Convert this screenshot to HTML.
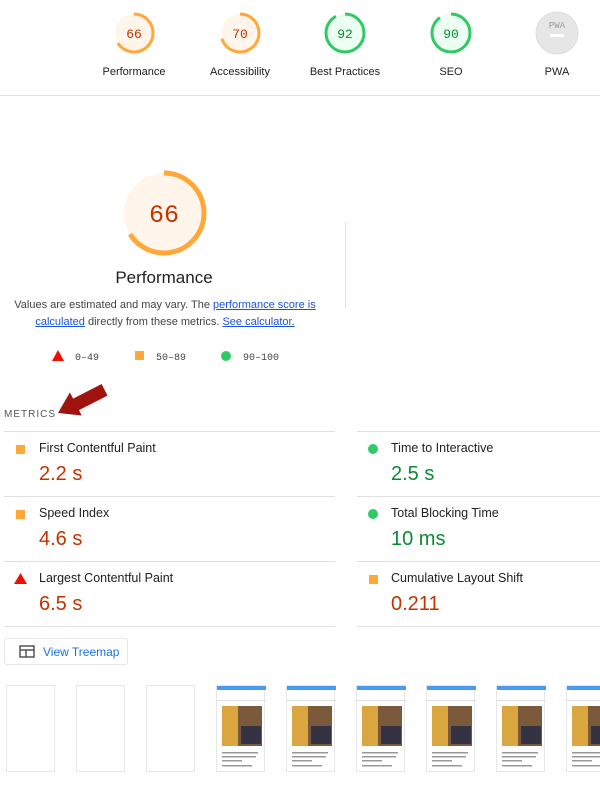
<!DOCTYPE html>
<html><head><meta charset="utf-8"><style>
body{margin:0;width:600px;height:787px;overflow:hidden;background:#fff;font-family:"Liberation Sans",Arial,sans-serif;color:#212121;position:relative}
.a{position:absolute}
.gl{position:absolute;top:66px;font-size:11px;width:120px;text-align:center;color:#212121}
.mt{position:absolute;font-size:12.5px;color:#212121}
.mv{position:absolute;font-size:20px}
.sep{position:absolute;height:1px;background:#e0e0e0}
.th{position:absolute;top:685px;width:49px;height:87px;border:1px solid #e6e6e6;box-sizing:border-box;background:#fff}
</style></head><body>
<svg class="a" style="left:0;top:0" width="600" height="100">
<g font-family="Liberation Mono,monospace" font-size="13" text-anchor="middle">
<circle cx="134" cy="33" r="19" fill="#fff5eb"/><circle cx="134" cy="33" r="19" fill="none" stroke="#ffa739" stroke-width="3" stroke-dasharray="78.8 200" transform="rotate(-90 134 33)"/><text x="134" y="38" fill="#c33300">66</text>
<circle cx="240" cy="33" r="19" fill="#fff5eb"/><circle cx="240" cy="33" r="19" fill="none" stroke="#ffa739" stroke-width="3" stroke-dasharray="83.6 200" transform="rotate(-90 240 33)"/><text x="240" y="38" fill="#c33300">70</text>
<circle cx="345" cy="33" r="19" fill="#ebfff3"/><circle cx="345" cy="33" r="19" fill="none" stroke="#2fca64" stroke-width="3" stroke-dasharray="109.8 200" transform="rotate(-90 345 33)"/><text x="345" y="38" fill="#0a8a33">92</text>
<circle cx="451" cy="33" r="19" fill="#ebfff3"/><circle cx="451" cy="33" r="19" fill="none" stroke="#2fca64" stroke-width="3" stroke-dasharray="107.4 200" transform="rotate(-90 451 33)"/><text x="451" y="38" fill="#0a8a33">90</text>
<circle cx="557" cy="33" r="21" fill="#e6e6e6" stroke="#ddd"/><text x="557" y="28" fill="#999" font-size="9">PWA</text><rect x="550" y="34" width="14" height="3" fill="#fff"/>
</g></svg>
<div class="gl" style="left:74px">Performance</div>
<div class="gl" style="left:180px">Accessibility</div>
<div class="gl" style="left:285px">Best Practices</div>
<div class="gl" style="left:391px">SEO</div>
<div class="gl" style="left:497px">PWA</div>
<div class="sep" style="left:0;top:95px;width:600px"></div>

<svg class="a" style="left:114px;top:163px" width="100" height="100">
<circle cx="50" cy="50" r="40" fill="#fff5eb"/>
<circle cx="50" cy="50" r="40" fill="none" stroke="#ffa739" stroke-width="5" stroke-dasharray="165.9 300" transform="rotate(-90 50 50)"/>
<text x="50" y="59" text-anchor="middle" font-family="Liberation Mono,monospace" font-size="25" fill="#c33300">66</text></svg>
<div class="a" style="left:64px;top:268px;width:200px;text-align:center;font-size:17px">Performance</div>
<div class="a" style="left:10px;top:297px;width:310px;text-align:center;font-size:11px;line-height:17px;color:#444">Values are estimated and may vary. The <span style="color:#1a53e0;text-decoration:underline">performance score is calculated</span> directly from these metrics. <span style="color:#1a53e0;text-decoration:underline">See calculator.</span></div>
<div class="a" style="left:345px;top:222px;width:1px;height:86px;background:#e0e0e0"></div>
<svg class="a" style="left:50px;top:349px" width="260" height="14">
<polygon points="8,1 14,12 2,12" fill="#eb0f00"/>
<rect x="85" y="2" width="9" height="9" fill="#ffa739"/>
<circle cx="176" cy="7" r="5" fill="#2fca64"/>
<g font-family="Liberation Mono,monospace" font-size="10" fill="#444"><text x="25" y="11">0–49</text><text x="106" y="11">50–89</text><text x="193" y="11">90–100</text></g></svg>

<svg class="a" style="left:0;top:370px" width="130" height="60"><g transform="translate(58 43) rotate(-27)"><polygon points="0,0 20,-13 20,-6 52,-6 52,7 20,7 20,13" fill="#a0140f"/></g></svg>
<div class="a" style="left:4px;top:409px;font-size:10px;letter-spacing:1px;color:#555">METRICS</div>
<div class="sep" style="left:4px;top:431px;width:331px"></div>
<div class="sep" style="left:357px;top:431px;width:243px"></div>
<div class="sep" style="left:4px;top:496px;width:331px"></div><div class="sep" style="left:357px;top:496px;width:243px"></div>
<div class="sep" style="left:4px;top:561px;width:331px"></div><div class="sep" style="left:357px;top:561px;width:243px"></div>
<div class="sep" style="left:4px;top:626px;width:331px"></div><div class="sep" style="left:357px;top:626px;width:243px"></div>

<div class="a" style="left:16px;top:445px;width:9px;height:9px;background:#ffa739"></div>
<div class="mt" style="left:39px;top:441px">First Contentful Paint</div><div class="mv" style="left:39px;top:463px;color:#c33300">2.2 s</div>
<div class="a" style="left:16px;top:510px;width:9px;height:9px;background:#ffa739"></div>
<div class="mt" style="left:39px;top:506px">Speed Index</div><div class="mv" style="left:39px;top:528px;color:#c33300">4.6 s</div>
<svg class="a" style="left:14px;top:573px" width="13" height="12"><polygon points="6.5,0 13,11 0,11" fill="#eb0f00"/></svg>
<div class="mt" style="left:39px;top:571px">Largest Contentful Paint</div><div class="mv" style="left:39px;top:593px;color:#c33300">6.5 s</div>
<div class="a" style="left:368px;top:444px;width:10px;height:10px;border-radius:50%;background:#2fca64"></div>
<div class="mt" style="left:391px;top:441px">Time to Interactive</div><div class="mv" style="left:391px;top:463px;color:#0a8a33">2.5 s</div>
<div class="a" style="left:368px;top:509px;width:10px;height:10px;border-radius:50%;background:#2fca64"></div>
<div class="mt" style="left:391px;top:506px">Total Blocking Time</div><div class="mv" style="left:391px;top:528px;color:#0a8a33">10 ms</div>
<div class="a" style="left:369px;top:575px;width:9px;height:9px;background:#ffa739"></div>
<div class="mt" style="left:391px;top:571px">Cumulative Layout Shift</div><div class="mv" style="left:391px;top:593px;color:#c33300">0.211</div>

<div class="a" style="left:4px;top:638px;width:124px;height:27px;border:1px solid #e6e6e6;border-radius:3px;box-sizing:border-box"></div>
<svg class="a" style="left:19px;top:645px" width="16" height="13"><rect x="1" y="1" width="14" height="11" fill="none" stroke="#555" stroke-width="1.5"/><line x1="1" y1="5" x2="15" y2="5" stroke="#555" stroke-width="1.5"/><line x1="7" y1="5" x2="7" y2="12" stroke="#555" stroke-width="1.5"/></svg>
<div class="a" style="left:43px;top:645px;font-size:12px;color:#1a73e8">View Treemap</div>

<div class="th" style="left:6px"></div><div class="th" style="left:76px"></div><div class="th" style="left:146px"></div>
<div class="th" style="left:216px"><svg width="49" height="87"><rect width="49" height="4" fill="#4a9af5"/><rect x="0" y="14" width="49" height="1" fill="#ddd"/><rect x="5" y="20" width="40" height="40" fill="#7a5a3a"/><rect x="5" y="20" width="16" height="40" fill="#d9a640"/><rect x="24" y="40" width="20" height="18" fill="#334"/><g fill="#999"><rect x="5" y="66" width="36" height="1.5"/><rect x="5" y="70" width="34" height="1.5"/><rect x="5" y="74" width="20" height="1.5"/><rect x="5" y="79" width="30" height="1.5"/></g></svg></div>
<div class="th" style="left:286px"><svg width="49" height="87"><rect width="49" height="4" fill="#4a9af5"/><rect x="0" y="14" width="49" height="1" fill="#ddd"/><rect x="5" y="20" width="40" height="40" fill="#7a5a3a"/><rect x="5" y="20" width="16" height="40" fill="#d9a640"/><rect x="24" y="40" width="20" height="18" fill="#334"/><g fill="#999"><rect x="5" y="66" width="36" height="1.5"/><rect x="5" y="70" width="34" height="1.5"/><rect x="5" y="74" width="20" height="1.5"/><rect x="5" y="79" width="30" height="1.5"/></g></svg></div>
<div class="th" style="left:356px"><svg width="49" height="87"><rect width="49" height="4" fill="#4a9af5"/><rect x="0" y="14" width="49" height="1" fill="#ddd"/><rect x="5" y="20" width="40" height="40" fill="#7a5a3a"/><rect x="5" y="20" width="16" height="40" fill="#d9a640"/><rect x="24" y="40" width="20" height="18" fill="#334"/><g fill="#999"><rect x="5" y="66" width="36" height="1.5"/><rect x="5" y="70" width="34" height="1.5"/><rect x="5" y="74" width="20" height="1.5"/><rect x="5" y="79" width="30" height="1.5"/></g></svg></div>
<div class="th" style="left:426px"><svg width="49" height="87"><rect width="49" height="4" fill="#4a9af5"/><rect x="0" y="14" width="49" height="1" fill="#ddd"/><rect x="5" y="20" width="40" height="40" fill="#7a5a3a"/><rect x="5" y="20" width="16" height="40" fill="#d9a640"/><rect x="24" y="40" width="20" height="18" fill="#334"/><g fill="#999"><rect x="5" y="66" width="36" height="1.5"/><rect x="5" y="70" width="34" height="1.5"/><rect x="5" y="74" width="20" height="1.5"/><rect x="5" y="79" width="30" height="1.5"/></g></svg></div>
<div class="th" style="left:496px"><svg width="49" height="87"><rect width="49" height="4" fill="#4a9af5"/><rect x="0" y="14" width="49" height="1" fill="#ddd"/><rect x="5" y="20" width="40" height="40" fill="#7a5a3a"/><rect x="5" y="20" width="16" height="40" fill="#d9a640"/><rect x="24" y="40" width="20" height="18" fill="#334"/><g fill="#999"><rect x="5" y="66" width="36" height="1.5"/><rect x="5" y="70" width="34" height="1.5"/><rect x="5" y="74" width="20" height="1.5"/><rect x="5" y="79" width="30" height="1.5"/></g></svg></div>
<div class="th" style="left:566px"><svg width="49" height="87"><rect width="49" height="4" fill="#4a9af5"/><rect x="0" y="14" width="49" height="1" fill="#ddd"/><rect x="5" y="20" width="40" height="40" fill="#7a5a3a"/><rect x="5" y="20" width="16" height="40" fill="#d9a640"/><rect x="24" y="40" width="20" height="18" fill="#334"/><g fill="#999"><rect x="5" y="66" width="36" height="1.5"/><rect x="5" y="70" width="34" height="1.5"/><rect x="5" y="74" width="20" height="1.5"/><rect x="5" y="79" width="30" height="1.5"/></g></svg></div>
</body></html>
